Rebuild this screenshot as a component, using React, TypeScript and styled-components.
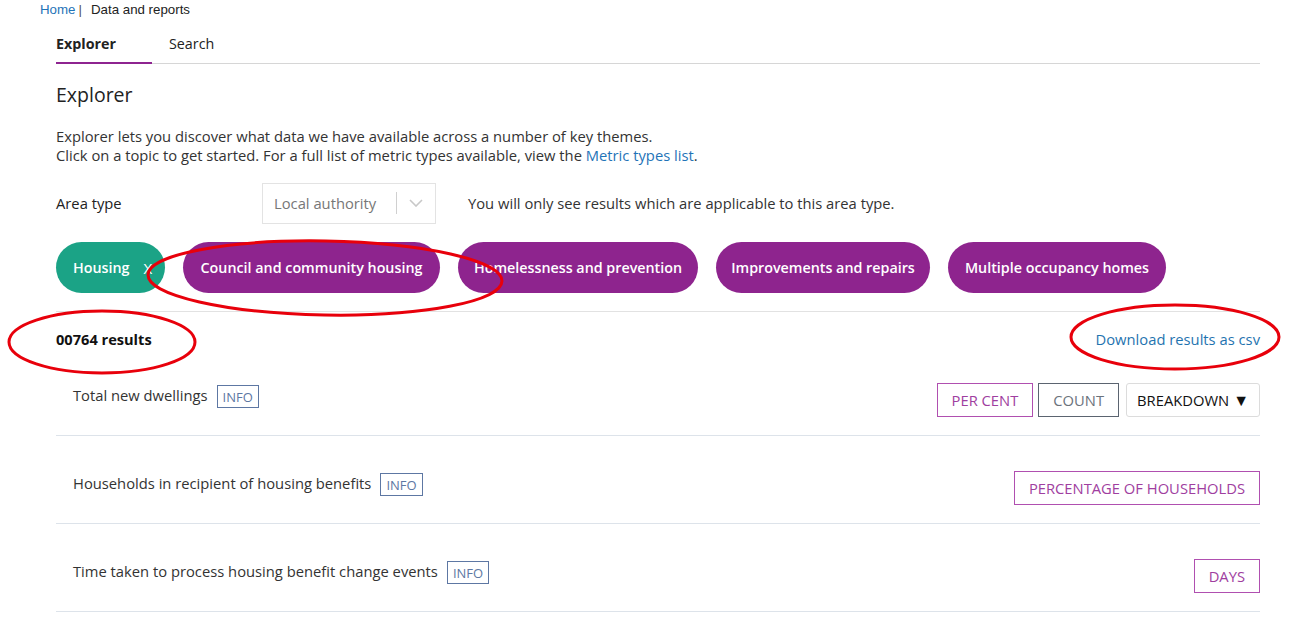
import React from "react";
import styled, { createGlobalStyle } from "styled-components";

const Global = createGlobalStyle`
  html, body { margin: 0; padding: 0; background: #fff; }
  body { font-family: "Open Sans", "Noto Sans", sans-serif; color: #222; }
  * { box-sizing: border-box; }
`;

const Page = styled.div`
  position: relative;
  width: 1289px;
  height: 630px;
  overflow: hidden;
`;

const Breadcrumb = styled.div`
  font-family: "Liberation Sans", Arial, sans-serif;
  font-size: 13.3px;
  color: #222;
  padding: 2px 0 0 40px;
  height: 20px;
  line-height: 16px;
`;

const Crumb = styled.a`
  color: #1f74b8;
  text-decoration: none;
`;

const Sep = styled.span`
  color: #555;
  margin: 0 9px 0 3px;
`;

const Main = styled.div`
  padding: 0 29px 0 56px;
`;

const Tabs = styled.div`
  display: flex;
  border-bottom: 1px solid #d6d6d6;
  margin-top: 13px;
  height: 31px;
`;

const Tab = styled.div<{ $active?: boolean }>`
  width: ${(p) => (p.$active ? "96px" : "auto")};
  font-size: 14.3px;
  font-weight: ${(p) => (p.$active ? 700 : 400)};
  color: #222;
  line-height: 22px;
  border-bottom: 2px solid ${(p) => (p.$active ? "#8e2490" : "transparent")};
  margin-bottom: -1px;
  ${(p) => (p.$active ? "" : "padding-left: 17px;")}
`;

const Title = styled.h1`
  font-size: 19.5px;
  font-weight: 400;
  margin: 16px 0 0;
  line-height: 30px;
  color: #222;
`;

const Intro = styled.p`
  font-size: 14.75px;
  line-height: 19px;
  margin: 17px 0 0;
  color: #333;
`;

const Link = styled.a`
  color: #1f74b8;
  text-decoration: none;
`;

const AreaRow = styled.div`
  display: flex;
  align-items: center;
  margin-top: 18px;
  height: 40px;
`;

const AreaLabel = styled.div`
  width: 206px;
  font-size: 14.75px;
  color: #222;
`;

const Select = styled.div`
  display: flex;
  align-items: center;
  width: 174px;
  height: 41px;
  border: 1px solid #e3e3e3;
  background: #fff;
`;

const SelectValue = styled.div`
  flex: 1;
  font-size: 14.75px;
  color: #777;
  padding-left: 11px;
  white-space: nowrap;
`;

const SelectDivider = styled.div`
  width: 1px;
  height: 22px;
  background: #d0d0d0;
`;

const SelectArrow = styled.div`
  width: 38px;
  display: flex;
  justify-content: center;
  align-items: center;
`;

const AreaNote = styled.div`
  margin-left: 32px;
  font-size: 14.75px;
  color: #333;
`;

const Pills = styled.div`
  display: flex;
  gap: 18px;
  margin-top: 19px;
  padding-bottom: 18px;
  border-bottom: 1px solid #e2e2e2;
`;

const Pill = styled.div<{ $green?: boolean; $w: number }>`
  display: flex;
  align-items: center;
  justify-content: ${(p) => (p.$green ? "flex-start" : "center")};
  width: ${(p) => p.$w}px;
  height: 51px;
  border-radius: 26px;
  background: ${(p) => (p.$green ? "#1ba386" : "#8e248e")};
  color: #fff;
  font-size: 14.3px;
  font-weight: 600;
  padding-left: ${(p) => (p.$green ? "17px" : "0")};
  white-space: nowrap;
`;

const PillX = styled.span`
  margin-left: 14px;
  font-weight: 400;
  font-size: 15px;
`;

const ResultsBar = styled.div`
  display: flex;
  justify-content: space-between;
  align-items: center;
  height: 54px;
  margin-bottom: -18px;
`;

const ResultsCount = styled.div`
  font-size: 14.6px;
  font-weight: 700;
  color: #111;
`;

const Download = styled.a`
  font-size: 14.75px;
  color: #1f74b0;
  text-decoration: none;
`;

const Row = styled.div`
  display: flex;
  justify-content: space-between;
  align-items: flex-start;
  height: 88px;
  padding: 36px 0 0 17px;
  border-bottom: 1px solid #dde3ea;
`;

const RowTitle = styled.div`
  display: flex;
  align-items: center;
  font-size: 14.75px;
  color: #333;
  line-height: 22px;
  margin-top: -2px;
`;

const Info = styled.span`
  margin-left: 9px;
  border: 1px solid #5d77a3;
  color: #5d77a3;
  font-size: 13px;
  height: 23px;
  padding: 0 5px;
  display: inline-flex;
  align-items: center;
  margin-top: 3px;
`;

const Buttons = styled.div`
  display: flex;
  gap: 5px;
  margin-top: -1px;
`;

const Btn = styled.div<{ $kind?: "purple" | "grey" | "plain" }>`
  height: 34px;
  padding: 0 ${(p) => (p.$kind === "plain" ? "10px" : "14px")};
  display: flex;
  align-items: center;
  font-size: 14.75px;
  border: 1px solid
    ${(p) =>
      p.$kind === "grey" ? "#5b6470" : p.$kind === "plain" ? "#dcdcdc" : "#b04fb0"};
  color: ${(p) =>
    p.$kind === "grey" ? "#6b737c" : p.$kind === "plain" ? "#111" : "#a03ea0"};
  border-radius: ${(p) => (p.$kind === "plain" ? "3px" : "0")};
  margin-left: ${(p) => (p.$kind === "plain" ? "2px" : "0")};
  background: #fff;
  white-space: nowrap;
`;

const Tri = styled.span`
  margin-left: 4px;
  font-size: 16px;
  line-height: 1;
`;

const Overlay = styled.svg`
  position: absolute;
  left: 0;
  top: 0;
  pointer-events: none;
`;

const rows = [
  { title: "Total new dwellings", buttons: ["PER CENT", "COUNT", "BREAKDOWN"] },
  { title: "Households in recipient of housing benefits", buttons: ["PERCENTAGE OF HOUSEHOLDS"] },
  { title: "Time taken to process housing benefit change events", buttons: ["DAYS"] },
];

export default function App() {
  return (
    <Page>
      <Global />
      <Breadcrumb>
        <Crumb>Home</Crumb>
        <Sep>|</Sep>
        Data and reports
      </Breadcrumb>
      <Main>
        <Tabs>
          <Tab $active>Explorer</Tab>
          <Tab>Search</Tab>
        </Tabs>
        <Title>Explorer</Title>
        <Intro>
          Explorer lets you discover what data we have available across a number of key themes.
          <br />
          Click on a topic to get started. For a full list of metric types available, view the{" "}
          <Link>Metric types list</Link>.
        </Intro>
        <AreaRow>
          <AreaLabel>Area type</AreaLabel>
          <Select>
            <SelectValue>Local authority</SelectValue>
            <SelectDivider />
            <SelectArrow>
              <svg width="14" height="8" viewBox="0 0 14 8">
                <path d="M1 1l6 6 6-6" fill="none" stroke="#c8c8c8" strokeWidth="1.6" />
              </svg>
            </SelectArrow>
          </Select>
          <AreaNote>You will only see results which are applicable to this area type.</AreaNote>
        </AreaRow>
        <Pills>
          <Pill $green $w={109}>
            Housing<PillX>X</PillX>
          </Pill>
          <Pill $w={257}>Council and community housing</Pill>
          <Pill $w={240}>Homelessness and prevention</Pill>
          <Pill $w={214}>Improvements and repairs</Pill>
          <Pill $w={218}>Multiple occupancy homes</Pill>
        </Pills>
        <ResultsBar>
          <ResultsCount>00764 results</ResultsCount>
          <Download>Download results as csv</Download>
        </ResultsBar>
        {rows.map((r) => (
          <Row key={r.title}>
            <RowTitle>
              {r.title}
              <Info>INFO</Info>
            </RowTitle>
            <Buttons>
              {r.buttons.map((b) =>
                b === "COUNT" ? (
                  <Btn key={b} $kind="grey">{b}</Btn>
                ) : b === "BREAKDOWN" ? (
                  <Btn key={b} $kind="plain">
                    {b}
                    <Tri>▼</Tri>
                  </Btn>
                ) : (
                  <Btn key={b} $kind="purple">{b}</Btn>
                )
              )}
            </Buttons>
          </Row>
        ))}
      </Main>
      <Overlay width="1289" height="630" viewBox="0 0 1289 630">
        <g fill="none" stroke="#e8000b" strokeWidth="3">
          <ellipse cx="325" cy="278" rx="177" ry="37" transform="rotate(1 325 278)" />
          <ellipse cx="102" cy="342" rx="93" ry="31" />
          <ellipse cx="1175" cy="337" rx="104" ry="32" />
        </g>
      </Overlay>
    </Page>
  );
}
